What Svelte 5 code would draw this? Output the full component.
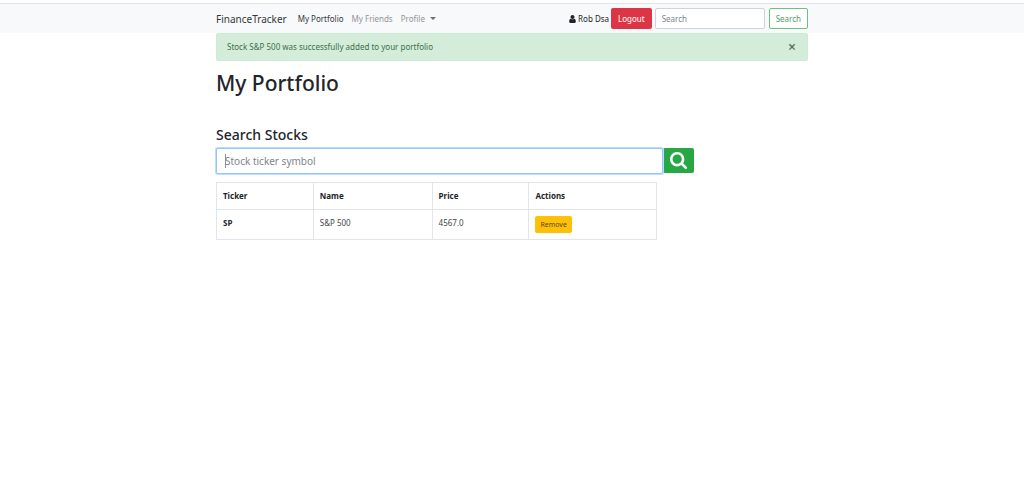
<script lang="ts">
interface Stock {
  ticker: string;
  name: string;
  price: string;
}

let stocks: Stock[] = $state([{ ticker: 'SP', name: 'S&P 500', price: '4567.0' }]);
let notice = $state('Stock S&P 500 was successfully added to your portfolio');
let symbol = $state('');
let friend = $state('');

function removeStock(stock: Stock) {
  stocks = stocks.filter((s) => s.ticker !== stock.ticker);
  notice = `${stock.name} was successfully removed from your portfolio`;
}

function handleSubmit(event: Event) {
  event.preventDefault();
}
</script>

<div class="page-edge"></div>

<header class="navbar">
  <div class="container navbar-inner">
    <a class="brand" href="/">FinanceTracker</a>
    <nav class="nav">
      <a class="nav-link active" href="/my_portfolio">My Portfolio</a>
      <a class="nav-link" href="/my_friends">My Friends</a>
      <a class="nav-link dropdown" href="/profile">Profile</a>
    </nav>

    <div class="account">
      <svg class="user-icon" viewBox="0 0 1280 1536" aria-hidden="true">
        <path d="M1280 1271c0 146-96 265-213 265H213C96 1536 0 1417 0 1271c0-262 65-567 327-567 81 79 191 128 313 128s232-49 313-128c262 0 327 305 327 567zM1024 384c0 212-172 384-384 384S256 596 256 384 428 0 640 0s384 172 384 384z" />
      </svg>
      <span>Rob Dsa</span>
      <button class="btn btn-danger" type="button">Logout</button>
    </div>

    <form class="nav-search" onsubmit={handleSubmit}>
      <input class="field" type="search" placeholder="Search" aria-label="Search" bind:value={friend} />
      <button class="btn btn-outline" type="submit">Search</button>
    </form>
  </div>
</header>

<main class="container">
  {#if notice}
    <div class="alert" role="alert">
      <span>{notice}</span>
      <button class="close" type="button" aria-label="Close" onclick={() => (notice = '')}>×</button>
    </div>
  {/if}

  <h1>My Portfolio</h1>

  <section>
    <h3><label for="stock">Search Stocks</label></h3>
    <form class="stock-search" onsubmit={handleSubmit}>
      <div class="stock-field" class:empty={!symbol}>
        <input
          id="stock"
          class="field field-lg"
          type="text"
          placeholder="Stock ticker symbol"
          bind:value={symbol}
        />
      </div>
      <button class="btn btn-success" type="submit" aria-label="Search stocks">
        <svg class="search-icon" viewBox="0 0 1664 1664" aria-hidden="true">
          <path d="M1152 704c0-247-201-448-448-448S256 457 256 704s201 448 448 448 448-201 448-448zm512 832c0 70-58 128-128 128-34 0-67-14-90-38l-343-342c-117 81-257 124-399 124C315 1408 0 1093 0 704S315 0 704 0s704 315 704 704c0 142-43 282-124 399l343 343c23 23 37 56 37 90z" />
        </svg>
      </button>
    </form>
  </section>

  <table>
    <thead>
      <tr>
        <th class="col-ticker" scope="col">Ticker</th>
        <th class="col-name" scope="col">Name</th>
        <th class="col-price" scope="col">Price</th>
        <th scope="col">Actions</th>
      </tr>
    </thead>
    <tbody>
      {#each stocks as stock (stock.ticker)}
        <tr>
          <th scope="row">{stock.ticker}</th>
          <td>{stock.name}</td>
          <td>{stock.price}</td>
          <td>
            <button class="btn btn-warning" type="button" onclick={() => removeStock(stock)}>Remove</button>
          </td>
        </tr>
      {/each}
    </tbody>
  </table>
</main>

<style>
  :global(body) {
    background: #fff;
    color: #212529;
    font-family: 'Noto Sans', 'Open Sans', sans-serif;
    font-size: 8px;
    line-height: 12px;
  }

  .container {
    box-sizing: border-box;
    width: 100%;
    max-width: 592px;
    margin: 0 auto;
  }

  .page-edge {
    height: 3px;
    background: #fdfdfe;
    border-bottom: 1px solid #e1e4e7;
  }

  .navbar {
    padding: 4px 0;
    background: #f8f9fa;
  }

  .navbar-inner {
    display: flex;
    align-items: center;
  }

  a {
    text-decoration: none;
  }

  .brand {
    margin-right: 11px;
    color: #33373b;
    font-size: 10px;
  }

  .nav {
    display: flex;
    gap: 8px;
    margin-right: auto;
  }

  .nav-link {
    color: #939597;
  }

  .nav-link.active {
    color: #33373b;
  }

  .dropdown::after {
    content: '';
    display: inline-block;
    margin-left: 5px;
    vertical-align: 2px;
    border-top: 3px solid #6c6e70;
    border-right: 3px solid transparent;
    border-left: 3px solid transparent;
  }

  .account {
    display: flex;
    align-items: center;
    gap: 2px;
    margin-right: 3px;
  }

  .user-icon {
    width: 7px;
    height: 8px;
    fill: #212529;
  }

  .nav-search {
    display: flex;
    gap: 4px;
  }

  .btn {
    box-sizing: border-box;
    height: 21px;
    padding: 0 6px;
    border: 1px solid transparent;
    border-radius: 2px;
    font: inherit;
    cursor: pointer;
  }

  .btn-danger {
    background: #dc3545;
    color: #fff;
  }

  .btn-outline {
    border-color: #6dbf82;
    background: #fff;
    color: #4f9f68;
  }

  .btn-success {
    display: flex;
    align-items: center;
    height: 25px;
    background: #28a745;
  }

  .search-icon {
    width: 17px;
    height: 17px;
    fill: #fff;
  }

  .btn-warning {
    height: 17px;
    padding: 0 4px;
    background: #ffc107;
    color: #574a20;
    font-size: 7px;
  }

  .field {
    box-sizing: border-box;
    width: 110px;
    height: 21px;
    margin: 0;
    padding: 0 6px;
    border: 1px solid #ced4da;
    border-radius: 2px;
    background: #fff;
    color: #495057;
    font: inherit;
    appearance: none;
  }

  .field::placeholder {
    color: #7d858c;
    opacity: 1;
  }

  .alert {
    display: flex;
    align-items: center;
    justify-content: space-between;
    margin-bottom: 8px;
    padding: 6px 10px;
    border: 1px solid #cdead5;
    border-radius: 2px;
    background: #d4edda;
    color: #3c6e4b;
  }

  .close {
    width: 10px;
    padding: 0;
    border: 0;
    background: transparent;
    color: #55705e;
    font: 600 14px/14px 'Noto Sans', sans-serif;
    cursor: pointer;
  }

  h1,
  h3 {
    margin: 0;
    font-weight: 500;
  }

  h1 {
    margin-bottom: 28px;
    font-size: 21px;
    line-height: 28px;
  }

  h3 {
    margin-bottom: 3px;
    font-size: 14px;
    line-height: 20px;
  }

  .stock-search {
    display: flex;
    width: 100%;
    max-width: 478px;
    margin-bottom: 8px;
  }

  .stock-field {
    position: relative;
    flex: 1;
  }

  .field-lg {
    display: block;
    width: 100%;
    height: 26px;
    padding: 0 8px;
    border-color: #93c7fb;
    outline: none;
    box-shadow: 0 0 0 1px #bfdeff;
    font-size: 10px;
  }

  /* text cursor in front of the placeholder */
  .stock-field.empty::after {
    content: '';
    position: absolute;
    top: 6px;
    left: 9px;
    width: 1px;
    height: 14px;
    background: #8b9298;
  }

  table {
    width: 100%;
    max-width: 441px;
    border-collapse: collapse;
    table-layout: fixed;
  }

  th,
  td {
    box-sizing: border-box;
    padding: 6px;
    border: 1px solid #e3e6e9;
    line-height: 14px;
    text-align: left;
    vertical-align: top;
  }

  td {
    color: #43474b;
  }

  td .btn {
    display: block;
  }

  .col-ticker {
    width: 22%;
  }

  .col-name {
    width: 27%;
  }

  .col-price {
    width: 22%;
  }
</style>
